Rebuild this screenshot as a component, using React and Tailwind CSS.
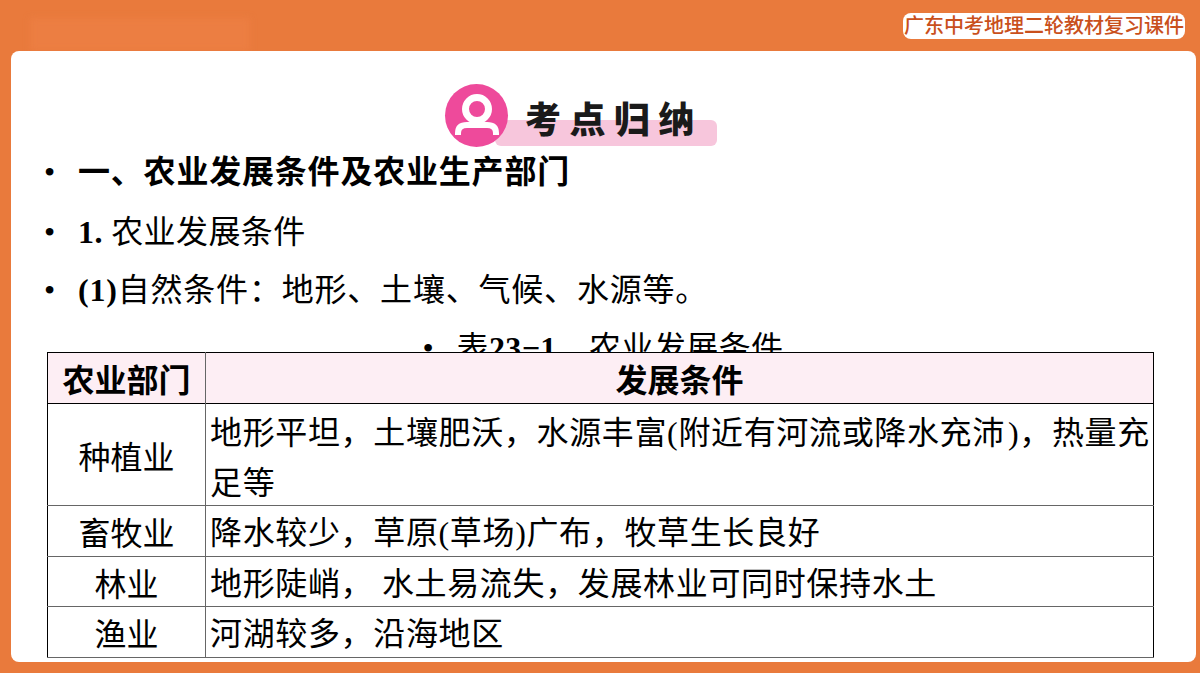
const font = { fontFamily: '"Liberation Serif", "Noto Sans CJK SC", serif' };

const rows = [
  {
    name: "种植业",
    text: (
      <div className="-mb-[3px]">
        地形平坦，土壤肥沃，水源丰富(附近有河流或降水充沛<span className="ml-[3px]">)，热量充足等</span>
      </div>
    ),
    h: "h-[102px]",
    cell: "pt-[4px] leading-[50px]",
  },
  { name: "畜牧业", text: "降水较少，草原(草场)广布，牧草生长良好", h: "h-[51px]", cell: "pt-[5px] leading-[45px]" },
  { name: "林业", text: "地形陡峭， 水土易流失，发展林业可同时保持水土", h: "h-[50px]", cell: "pt-[5px] leading-[44px]" },
  { name: "渔业", text: "河湖较多，沿海地区", h: "h-[51px]", cell: "pt-[5px] leading-[45px]" },
];

function Bullet({ children, className = "tracking-[0.8px]" }) {
  return (
    <div className={`flex items-center text-[32px] leading-[40px] text-black ${className}`}>
      <span className="w-[34px] font-normal">•</span>
      <span>{children}</span>
    </div>
  );
}

export default function App() {
  return (
    <div className="w-[1200px] h-[676px] overflow-hidden bg-white" style={font}>
      <div className="bg-[#e97a3c] h-[673px] pl-[11px] pr-[4px]">
        {/* top bar */}
        <div className="h-[51px] flex items-start justify-between">
          <div className="mt-[18px] ml-[19px] w-[220px] h-[33px] bg-[#ec7e42] blur-[3px]"></div>
          <div className="mt-[13px] mr-[11px] w-[282px] h-[26px] bg-white rounded-[8px] flex items-center justify-center text-[20px] leading-none font-medium text-[#c9501c] whitespace-nowrap">
            广东中考地理二轮教材复习课件
          </div>
        </div>

        {/* slide */}
        <div className="h-[611px] bg-white rounded-[8px] relative">
          <div className="h-[101px] pt-[33px] pl-[434px]">
            <div className="relative w-[272px] h-[63px]">
              <div className="absolute left-[50px] top-[36px] w-[222px] h-[26px] bg-[#f7c6dc] rounded-[6px]"></div>
              <div className="absolute left-0 top-0 w-[63px] h-[63px] rounded-full bg-[#ee4a9b] flex items-center justify-center">
                <svg width="44" height="44" viewBox="0 0 44 44" fill="none" stroke="#fff" strokeWidth="6">
                  <circle cx="22" cy="15" r="11.500" strokeWidth="7" />
                  <path d="M3 41v-2c0-6 4-8 9-8h20c5 0 9 2 9 8v2" />
                </svg>
              </div>
              <div className="absolute left-[80px] top-[11px] text-[36px] leading-[44px] font-black tracking-[8.5px] text-[#1a1a1a] whitespace-nowrap" style={{ fontFamily: '"Noto Sans CJK SC", sans-serif' }}>
                考点归纳
              </div>
            </div>
          </div>

          <div className="pl-[33px]">
            <Bullet className="font-bold tracking-[0.8px] h-[40px]">一、农业发展条件及农业生产部门</Bullet>
            <Bullet className="mt-[20px] tracking-[0.4px]"><b>1.</b> 农业发展条件</Bullet>
            <Bullet className="mt-[18px] tracking-[0.8px]"><b>(1)</b>自然条件：地形、土壤、气候、水源等。</Bullet>
            <div className="h-[24px] mt-[18px] overflow-hidden">
              <div className="flex justify-center pr-[34px]">
                <Bullet className="tracking-[0.4px]">表<b>23−1</b>　农业发展条件</Bullet>
              </div>
            </div>
          </div>

          <div className="ml-[36px] w-[1107px]">
            <table className="w-full table-fixed border-collapse border border-black text-[32px] text-black">
              <colgroup>
                <col className="w-[158px]" />
                <col />
              </colgroup>
              <thead>
                <tr className="h-[51px] bg-[#fdeef4] border-b border-black font-bold">
                  <th className="border-r border-[#666] text-center pt-[5px] leading-[40px]">农业部门</th>
                  <th className="text-center pt-[5px] leading-[40px]">发展条件</th>
                </tr>
              </thead>
              <tbody>
                {rows.map((r) => (
                  <tr key={r.name} className={`border-b border-[#666] ${r.h}`}>
                    <td className="border-r border-[#666] text-center pt-[6px] leading-[40px]">{r.name}</td>
                    <td className={`pl-[4px] pr-[3px] tracking-[0.65px] ${r.cell}`}>{r.text}</td>
                  </tr>
                ))}
              </tbody>
            </table>
          </div>
        </div>
      </div>
    </div>
  );
}
